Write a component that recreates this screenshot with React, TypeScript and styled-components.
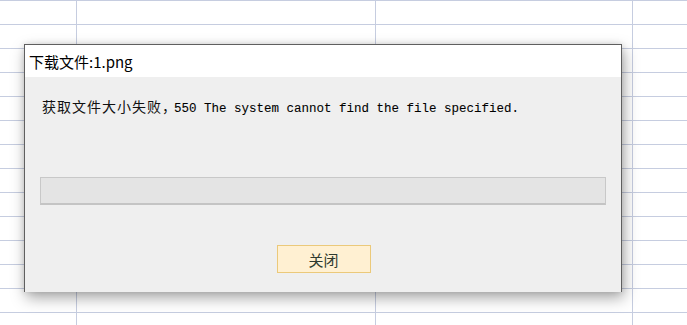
import React from "react";
import styled, { createGlobalStyle } from "styled-components";

const GlobalStyle = createGlobalStyle`
  html, body {
    margin: 0;
    padding: 0;
    background: #ffffff;
  }
  * { box-sizing: border-box; }
`;

const Sheet = styled.div`
  position: relative;
  width: 687px;
  height: 325px;
  overflow: hidden;
  background: #ffffff;
`;

const Grid = styled.div`
  display: grid;
  grid-template-columns: 76px 299px 257px 1fr;
  grid-auto-rows: 24px;
`;

const Cell = styled.div<{ $first: boolean }>`
  border-top: 1px solid #c6cde0;
  border-left: ${(p) => (p.$first ? "none" : "1px solid #c6cde0")};
`;

const Dialog = styled.div`
  position: absolute;
  left: 24px;
  top: 44px;
  width: 598px;
  height: 248px;
  display: flex;
  flex-direction: column;
  border: 1px solid #5f5f5f;
  border-bottom: none;
  background: #efefef;
  box-shadow: 2px 6px 14px rgba(0, 0, 0, 0.34), 0 0 6px rgba(0, 0, 0, 0.12);
`;

const TitleBar = styled.div`
  height: 32px;
  flex: none;
  display: flex;
  align-items: center;
  padding-left: 4px;
  background: #ffffff;
  font-family: "Noto Sans CJK SC", "Noto Sans", sans-serif;
  font-size: 15px;
  color: #000000;
`;

const Body = styled.div`
  flex: 1;
  display: flex;
  flex-direction: column;
  padding: 18px 15px 0 15px;
  background: #efefef;
`;

const Message = styled.div`
  height: 22px;
  line-height: 22px;
  padding-left: 2px;
  white-space: nowrap;
  color: #111111;
`;

const Cjk = styled.span`
  font-family: "Noto Sans CJK SC", sans-serif;
  font-size: 14px;
  letter-spacing: 1px;
  margin-right: -3px;
`;

const Mono = styled.span`
  font-family: "Liberation Mono", "Courier New", monospace;
  font-size: 12.5px;
  color: #000000;
  -webkit-text-stroke: 0.08px #000000;
`;

const Progress = styled.div`
  margin-top: 60px;
  height: 28px;
  flex: none;
  background: #e4e4e4;
  border: 1px solid #c8c8c8;
  border-bottom: 2px solid #c4c4c4;
`;

const ButtonRow = styled.div`
  margin-top: 40px;
  display: flex;
  justify-content: center;
`;

const Button = styled.button`
  width: 94px;
  height: 28px;
  margin-left: 1px;
  padding: 0;
  background: #fff0d2;
  border: 1px solid #ebc97a;
  font-family: "Noto Sans CJK SC", sans-serif;
  font-size: 15px;
  color: #2f3a2f;
  cursor: pointer;
`;

export default function App() {
  const cells = [];
  for (let r = 0; r < 14; r++) {
    for (let c = 0; c < 4; c++) {
      cells.push(<Cell key={`${r}-${c}`} $first={c === 0} />);
    }
  }
  return (
    <>
      <GlobalStyle />
      <Sheet>
        <Grid>{cells}</Grid>
        <Dialog>
          <TitleBar>下载文件:1.png</TitleBar>
          <Body>
            <Message>
              <Cjk>获取文件大小失败，</Cjk>
              <Mono>550 The system cannot find the file specified.</Mono>
            </Message>
            <Progress />
            <ButtonRow>
              <Button>关闭</Button>
            </ButtonRow>
          </Body>
        </Dialog>
      </Sheet>
    </>
  );
}
